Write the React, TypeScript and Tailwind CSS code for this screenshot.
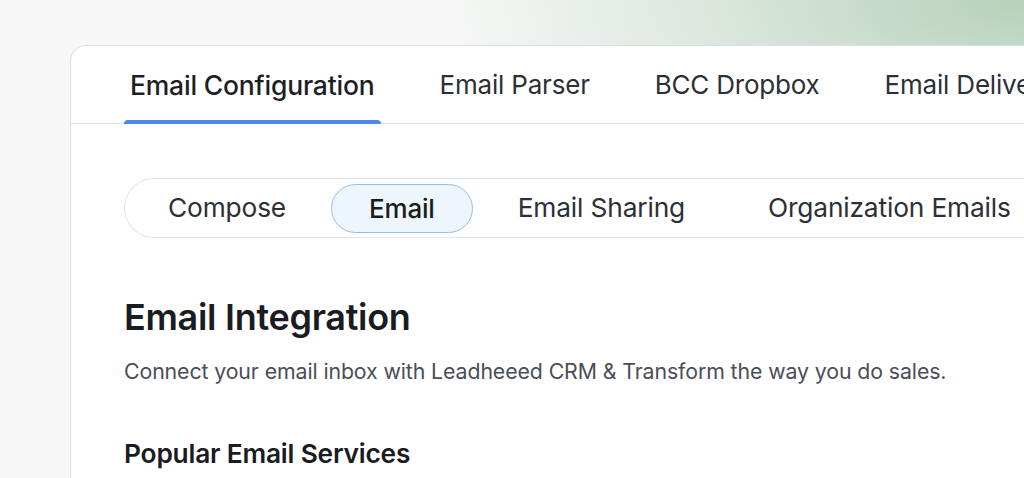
import React from "react";

const topTabs = ["Email Configuration", "Email Parser", "BCC Dropbox", "Email Deliverability"];
const subTabs = ["Compose", "Email", "Email Sharing", "Organization Emails"];

export default function App() {
  return (
    <div
      className="relative h-[478px] w-[1024px] overflow-hidden bg-[#f6f7f6]"
      style={{ fontFamily: "Inter, 'Noto Sans', sans-serif" }}
    >
      {/* background glow */}
      <div className="absolute inset-0 bg-[radial-gradient(ellipse_70%_60%_at_100%_0%,#b5d1ba_0%,#dce7de_45%,rgba(246,247,246,0)_80%)]" />

      <div className="relative pl-[70px] pt-[45px]">
        <div className="w-[1000px] rounded-tl-[16px] border-l border-t border-[#d9e0e8] bg-white pb-10">
          {/* top tabs */}
          <div className="flex gap-[53px] border-b border-[#dde3ea] pl-[53px]">
            {topTabs.map((t, i) => (
              <div
                key={t}
                className={`relative whitespace-nowrap px-[6px] pb-[22px] pt-[23px] leading-[32px] tracking-[-0.2px] ${i === 0 ? "text-[26.5px] font-medium text-[#1d1f24]" : "text-[26px] text-[#2c2f36]"}`}
              >
                {t}
                {i === 0 && <div className="absolute -bottom-px left-0 right-0 h-[4px] rounded-t-full bg-[#4a8ae6]" />}
              </div>
            ))}
          </div>

          <div className="pl-[53px]">
            {/* sub tabs */}
            <div className="mt-[54px] flex h-[60px] items-center gap-[7px] whitespace-nowrap rounded-l-full border border-r-0 border-[#e3e5e8] pl-[5px]">
              {subTabs.map((t) => (
                <div
                  key={t}
                  className={
                    t === "Email"
                      ? "flex h-[49px] items-center rounded-full border border-[#8fc0ea] bg-[#eef6fd] px-[37px] text-[26px] font-medium tracking-[-0.2px] text-[#1a1c20]"
                      : "px-[38px] text-[26.3px] tracking-[-0.15px] text-[#2c2f36]"
                  }
                >
                  {t}
                </div>
              ))}
            </div>

            <h1 className="mt-[56px] text-[36px] font-semibold leading-[46px] tracking-[-0.3px] text-[#1b1c1f]">Email Integration</h1>
            <p className="mt-[17px] text-[21.3px] leading-[28px] tracking-[-0.1px] text-[#4a4e58]">
              Connect your email inbox with Leadheeed CRM &amp; Transform the way you do sales.
            </p>
            <h2 className="mt-[53px] text-[26.3px] font-semibold leading-[32px] tracking-[-0.2px] text-[#1b1c1f]">Popular Email Services</h2>
          </div>
        </div>
      </div>
    </div>
  );
}
